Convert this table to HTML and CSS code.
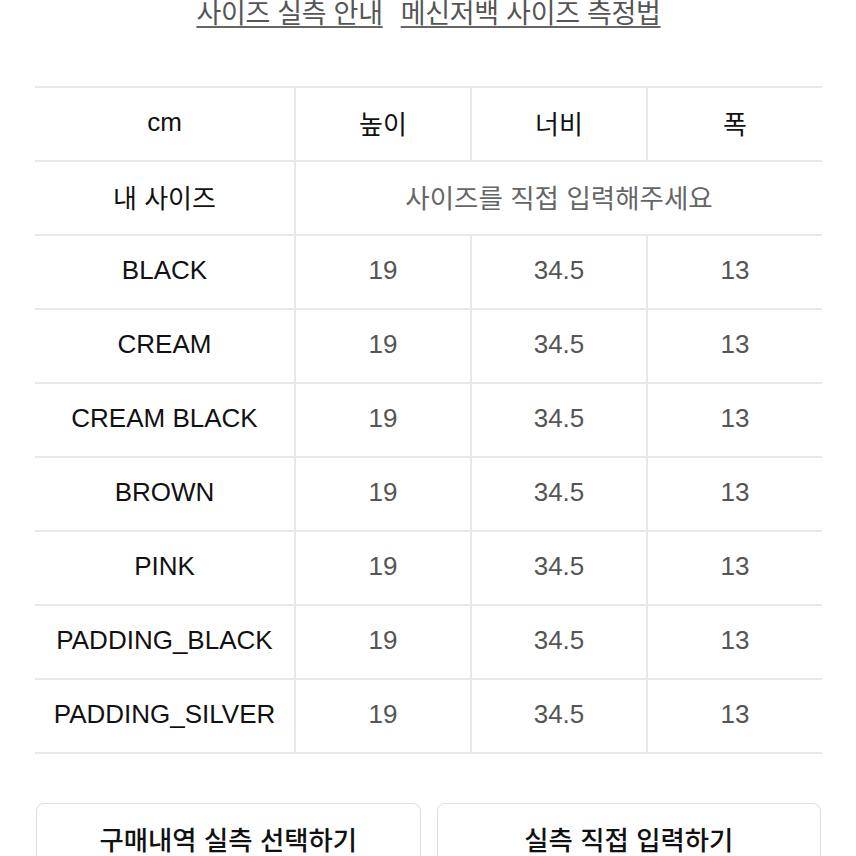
FILE: index.html
```html
<!DOCTYPE html>
<html lang="ko">
<head>
<meta charset="utf-8">
<link rel="stylesheet" href="styles.css">
</head>
<body>
<div class="page">
  <nav class="links">
    <a class="link" href="#">사이즈 실측 안내</a>
    <a class="link" href="#">메신저백 사이즈 측정법</a>
  </nav>
  <div class="table">
    <div class="cell head first">cm</div>
    <div class="cell head">높이</div>
    <div class="cell head">너비</div>
    <div class="cell head">폭</div>

    <div class="cell head first">내 사이즈</div>
    <div class="cell hint span3">사이즈를 직접 입력해주세요</div>

    <div class="cell head first">BLACK</div>
    <div class="cell val">19</div><div class="cell val">34.5</div><div class="cell val">13</div>

    <div class="cell head first">CREAM</div>
    <div class="cell val">19</div><div class="cell val">34.5</div><div class="cell val">13</div>

    <div class="cell head first">CREAM BLACK</div>
    <div class="cell val">19</div><div class="cell val">34.5</div><div class="cell val">13</div>

    <div class="cell head first">BROWN</div>
    <div class="cell val">19</div><div class="cell val">34.5</div><div class="cell val">13</div>

    <div class="cell head first">PINK</div>
    <div class="cell val">19</div><div class="cell val">34.5</div><div class="cell val">13</div>

    <div class="cell head first">PADDING_BLACK</div>
    <div class="cell val">19</div><div class="cell val">34.5</div><div class="cell val">13</div>

    <div class="cell head first">PADDING_SILVER</div>
    <div class="cell val">19</div><div class="cell val">34.5</div><div class="cell val">13</div>
  </div>
  <div class="buttons">
    <button class="btn">구매내역 실측 선택하기</button>
    <button class="btn">실측 직접 입력하기</button>
  </div>
</div>
</body>
</html>
```

FILE: styles.css
```css
* { box-sizing: border-box; }
html, body { margin: 0; padding: 0; background: #fff; }
body {
  font-family: "Liberation Sans", "Noto Sans CJK KR", sans-serif;
  color: #111;
  overflow: hidden;
  height: 856px;
}
.page {
  padding: 0 34px 0 35px;
}
.links {
  display: flex;
  justify-content: center;
  gap: 18px;
  height: 86px;
  padding-top: 0;
}
.link {
  font-family: "Noto Sans CJK KR", "Liberation Sans", sans-serif;
  font-size: 27px;
  line-height: 30px;
  margin-top: -3px;
  color: #555;
  text-decoration: underline;
  text-decoration-thickness: 2px;
  text-underline-offset: 3px;
  text-decoration-color: #666;
  letter-spacing: -0.3px;
}
.table {
  display: grid;
  grid-template-columns: 259px 1fr 1fr 1fr;
  border-top: 2px solid #e8e8e8;
}
.cell {
  height: 74px;
  display: flex;
  align-items: center;
  justify-content: center;
  padding-bottom: 3px;
  border-bottom: 2px solid #e8e8e8;
  border-left: 2px solid #e8e8e8;
  font-size: 26px;
}
.cell.first { border-left: none; }
.head {
  color: #111;
  font-family: "Liberation Sans", "Noto Sans CJK KR", sans-serif;
}
.val { color: #555; }
.hint {
  grid-column: span 3;
  color: #666;
  font-family: "Noto Sans CJK KR", "Liberation Sans", sans-serif;
  font-size: 26.5px;
}
.buttons {
  display: flex;
  gap: 16px;
  margin-top: 49px;
  padding-right: 1px;
  padding-left: 1px;
}
.btn {
  flex: 1;
  height: 72px;
  padding-bottom: 2px;
  background: #fff;
  border: 1.5px solid #dedede;
  border-radius: 8px;
  font-family: "Noto Sans CJK KR", "Liberation Sans", sans-serif;
  font-size: 26.4px;
  font-weight: 500;
  color: #111;
}
```
